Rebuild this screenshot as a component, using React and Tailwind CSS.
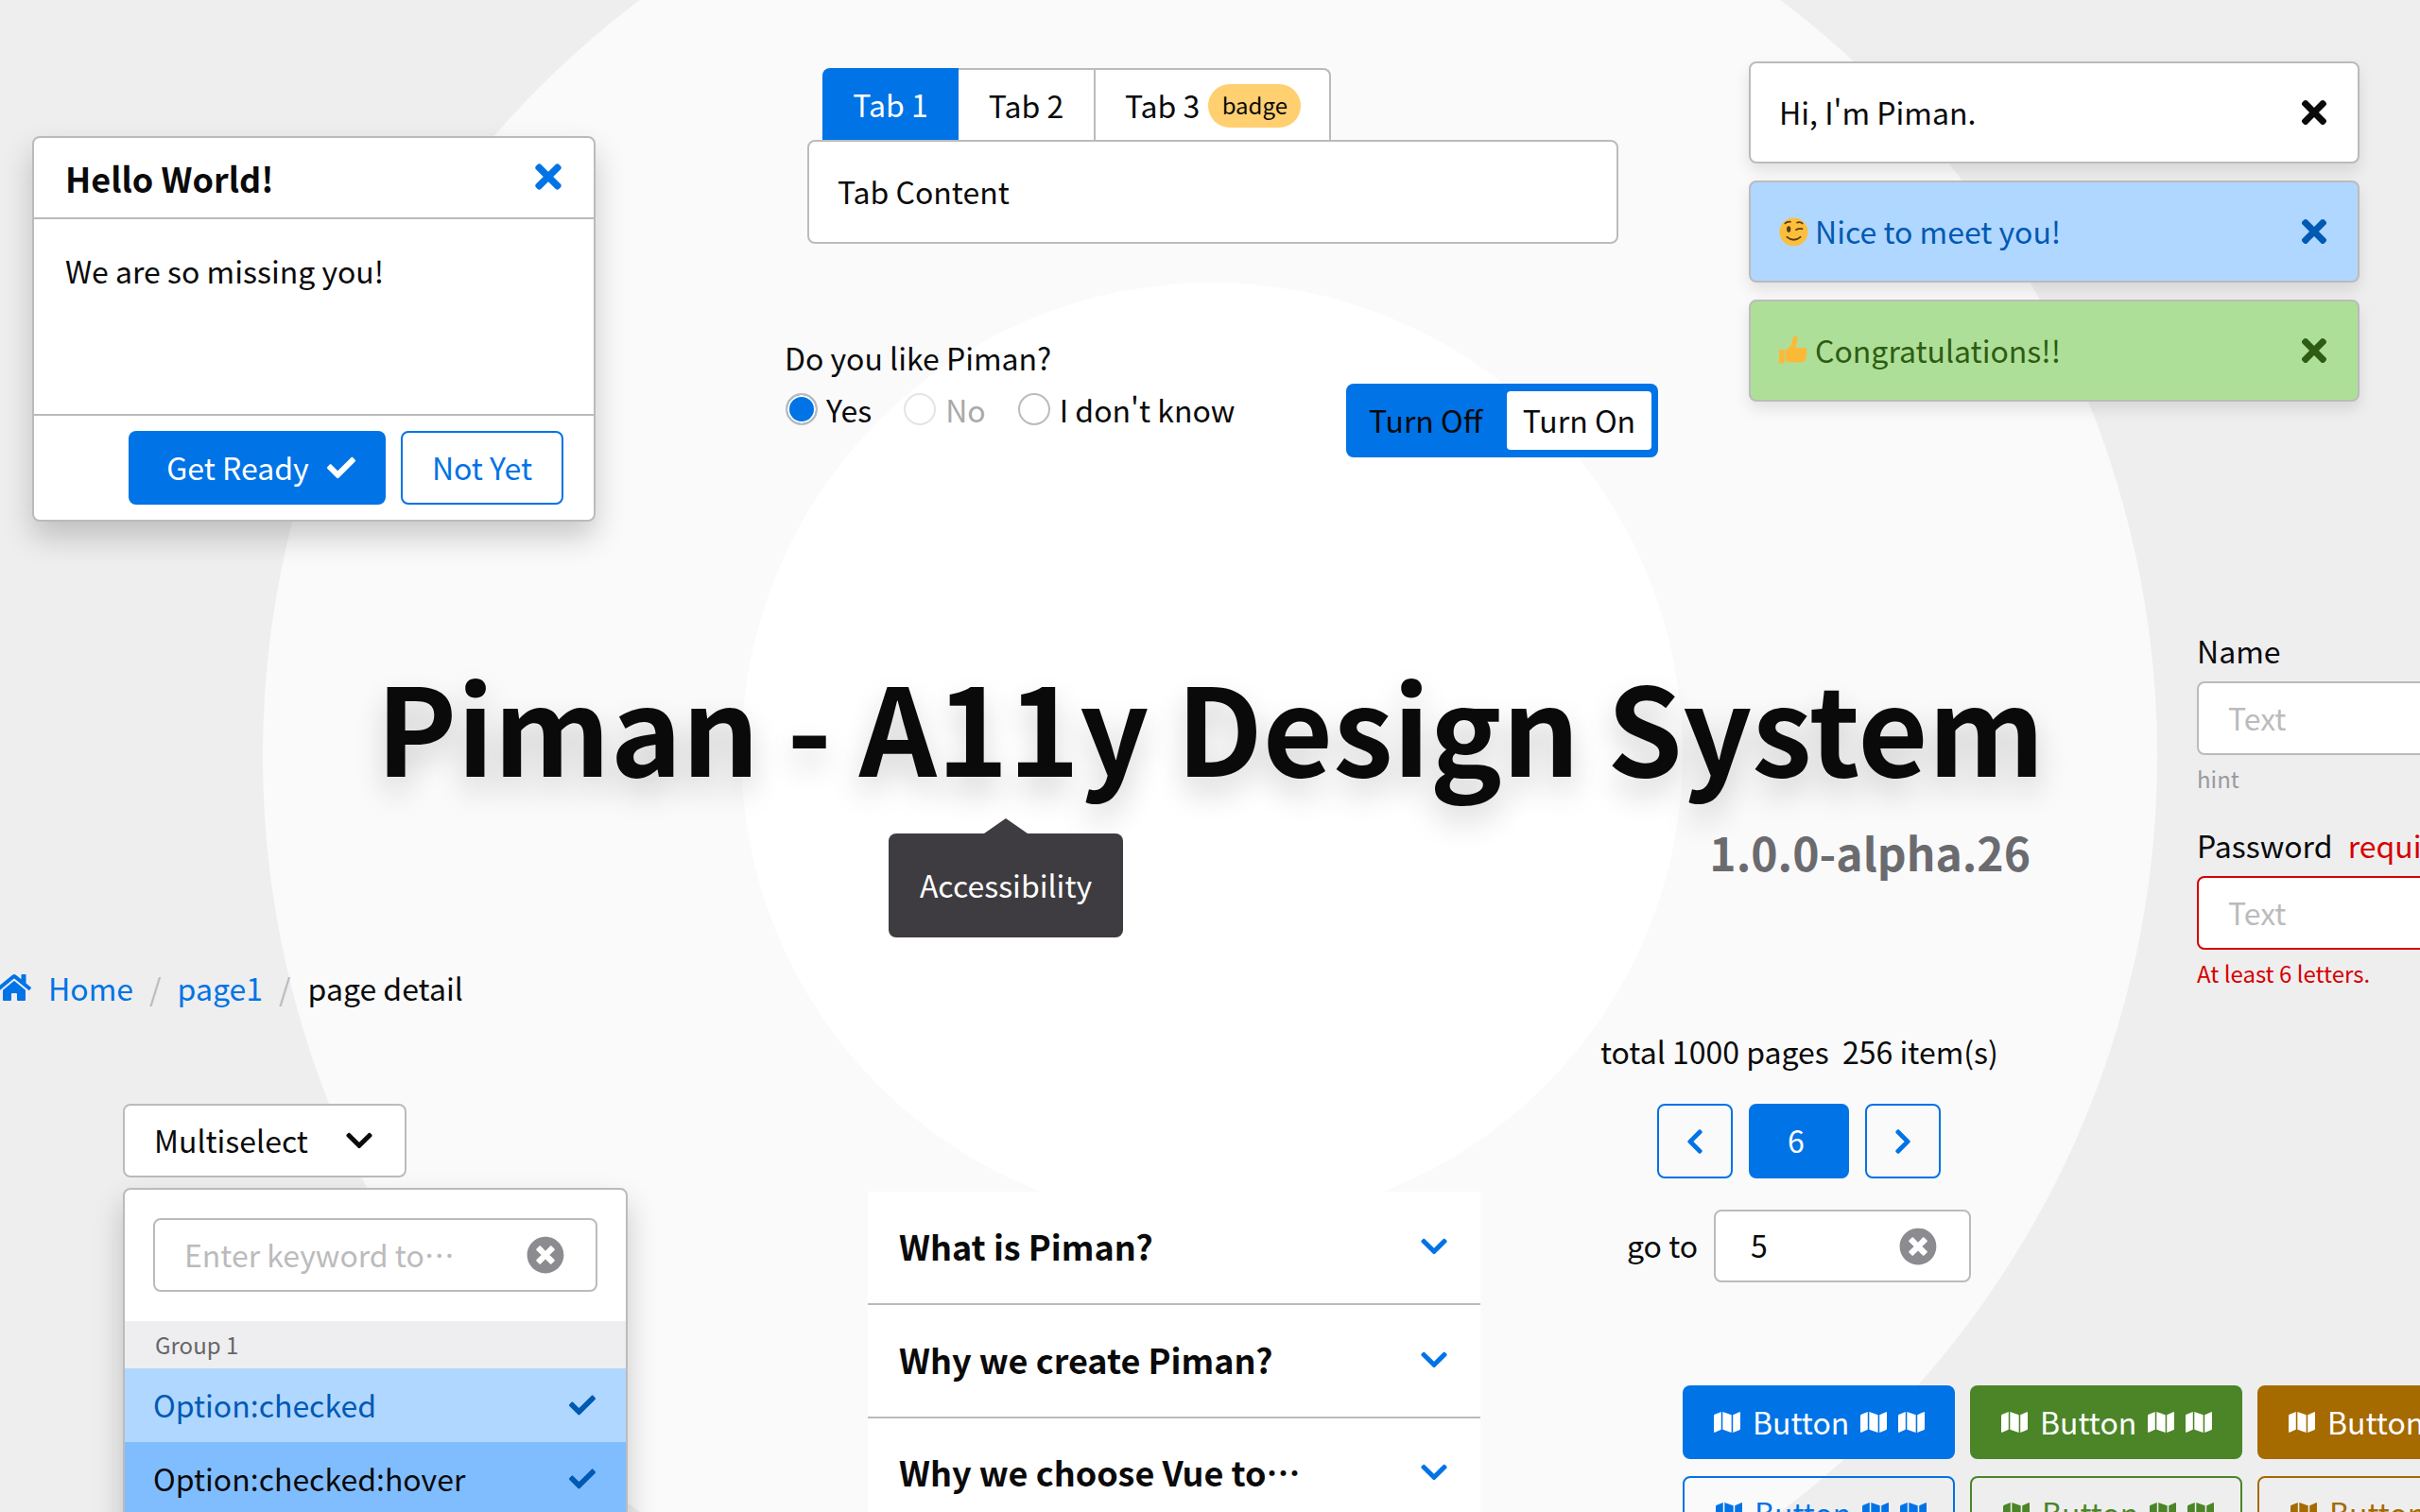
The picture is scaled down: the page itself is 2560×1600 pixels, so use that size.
import React from "react";
import {
  FaTimes,
  FaCheck,
  FaHome,
  FaChevronDown,
  FaChevronLeft,
  FaChevronRight,
  FaMap,
  FaTimesCircle,
} from "react-icons/fa";

function WinkEmoji() {
  return (
    <svg viewBox="0 0 32 32" className="mt-[3px] h-[31px] w-[31px] shrink-0">
      <circle cx="16" cy="16" r="15.5" fill="#fbbf3c" />
      <ellipse cx="10.5" cy="13" rx="2.2" ry="3.4" fill="#5b3a16" />
      <path d="M18 14q4-3 8-1M6 7q3-3 7-2M19 6q4-2 7 1M8 21q8 7 16 0" fill="none" stroke="#5b3a16" strokeWidth="1.8" />
    </svg>
  );
}

function ThumbEmoji() {
  return (
    <svg viewBox="0 0 32 32" className="mt-[3px] h-[32px] w-[31px] shrink-0">
      <path
        d="M0 15h6v15H0zM7 16l6-6 3-10c3-1 5 2 4 5l-2 8h10c3 0 3 4 1 4 2 1 2 4 0 5 1 1 1 3-1 4 0 2-1 3-3 3H12l-5-2z"
        fill="#fbb93a"
      />
    </svg>
  );
}

function Alert({ bg, text, children }) {
  return (
    <div className={`flex h-[108px] items-center justify-between rounded-lg border-2 border-[#bbbbbd] pl-[30px] pr-[27px] shadow-[0_8px_16px_rgba(0,0,0,0.1)] ${bg} ${text}`}>
      <div className="flex items-center gap-[7px] pb-[3px]">{children}</div>
      <FaTimes className="text-[38px]" />
    </div>
  );
}

function MapButton({ className }) {
  return (
    <div className={`flex h-[78px] w-[288px] shrink-0 items-center rounded-lg pl-[33px] ${className}`}>
      <FaMap className="text-[28px]" />
      <span className="ml-[13px] pb-[3px]">Button</span>
      <FaMap className="ml-[12px] text-[28px]" />
      <FaMap className="ml-[12px] text-[28px]" />
    </div>
  );
}

function Field({ border, children, label, note }) {
  return (
    <div className="flex flex-col">
      <div className="h-[48px] leading-[44px]">{label}</div>
      <div className={`mt-[7px] flex h-[78px] w-[640px] items-center rounded-lg border-2 bg-white pb-[3px] pl-[31px] text-[#bbbbbd] ${border}`}>Text</div>
      <div className="mt-[5px] h-[44px] text-[24px] leading-[40px]">{note}</div>
      {children}
    </div>
  );
}

function AccordionRow({ title, divider }) {
  return (
    <div className={`flex items-center justify-between pl-[33px] pr-[33px] ${divider ? "h-[120px] border-b-2 border-[#bbbbbd]" : "h-[116px]"}`}>
      <span className="pb-[5px] text-[36px] font-bold">{title}</span>
      <FaChevronDown className="mb-[2px] text-[32px] text-[#0073e6]" />
    </div>
  );
}

export default function App() {
  return (
    <div
      lang="zh-CN"
      className="relative h-[1600px] w-[2560px] overflow-hidden bg-[#eeeeef] text-[32px] leading-[48px] text-[#0a0a0a]"
      style={{ fontFamily: '"Noto Sans CJK SC", "Noto Sans", sans-serif' }}
    >
      {/* background circles */}
      <div className="absolute left-[278px] top-[-202px] h-[2004px] w-[2004px] rounded-full bg-[#fafafb]" />
      <div className="absolute left-[784px] top-[299px] h-[996px] w-[996px] rounded-full bg-white" />

      {/* dialog */}
      <div className="absolute left-[34px] top-[144px] w-[596px] rounded-lg border-2 border-[#bbbbbd] bg-white shadow-[0_16px_32px_rgba(0,0,0,0.2)]">
        <div className="flex h-[86px] items-center justify-between border-b-2 border-[#bbbbbd] pl-[33px] pr-[28px]">
          <span className="text-[36px] font-bold">Hello World!</span>
          <FaTimes className="mb-[2px] text-[40px] text-[#0073e6]" />
        </div>
        <div className="h-[208px] border-b-2 border-[#bbbbbd] px-[33px] pt-[30px]">We are so missing you!</div>
        <div className="flex justify-end gap-[16px] pb-[16px] pr-[32px] pt-[16px]">
          <div className="flex h-[78px] w-[272px] items-center justify-center gap-[19px] rounded-lg bg-[#0073e6] pl-[8px] text-white">
            <span className="pb-[3px]">Get Ready</span>
            <FaCheck className="text-[30px]" />
          </div>
          <div className="flex h-[78px] w-[172px] items-center justify-center rounded-lg border-2 border-[#0073e6] pb-[3px] text-[#0073e6]">Not Yet</div>
        </div>
      </div>

      {/* tabs */}
      <div className="absolute left-[854px] top-[72px] flex w-[858px] flex-col">
        <div className="ml-[16px] flex h-[78px]">
          <div className="flex w-[144px] items-center justify-center rounded-tl-lg bg-[#0073e6] pb-[3px] text-white">Tab 1</div>
          <div className="flex w-[145px] items-center justify-center border-r-2 border-t-2 border-[#bbbbbd] bg-white pb-[3px]">Tab 2</div>
          <div className="flex w-[249px] items-center gap-[9px] rounded-tr-lg border-r-2 border-t-2 border-[#bbbbbd] bg-white pl-[31px]">
            <span className="pb-[3px]">Tab 3</span>
            <span className="flex h-[46px] w-[98px] items-center justify-center rounded-full bg-[#ffcf70] pb-[2px] text-[24px]">badge</span>
          </div>
        </div>
        <div className="-mt-[2px] flex h-[110px] items-center rounded-lg border-2 border-[#bbbbbd] bg-white pb-[3px] pl-[30px]">Tab Content</div>
      </div>

      {/* radio group */}
      <div className="absolute left-[830px] top-[354px] flex flex-col">
        <div className="h-[48px]">Do you like Piman?</div>
        <div className="mt-[7px] flex h-[48px] items-center">
          <span className="ml-[1px] h-[34px] w-[34px] rounded-full border-2 border-[#bbbbbd] bg-[#0073e6] shadow-[inset_0_0_0_2px_white]" />
          <span className="ml-[9px]">Yes</span>
          <span className="ml-[34px] h-[34px] w-[34px] rounded-full border-2 border-[#e4e4e6] bg-white" />
          <span className="ml-[10px] text-[#a9a9ab]">No</span>
          <span className="ml-[34px] h-[34px] w-[34px] rounded-full border-2 border-[#bbbbbd] bg-white" />
          <span className="ml-[10px]">I don't know</span>
        </div>
      </div>

      {/* switch */}
      <div className="absolute left-[1424px] top-[406px] flex h-[78px] w-[330px] items-center rounded-lg bg-[#0073e6] pl-[24px] pr-[7px]">
        <span className="w-[146px] pb-[3px]">Turn Off</span>
        <span className="flex h-[62px] flex-1 items-center justify-center rounded bg-white pb-[3px]">Turn On</span>
      </div>

      {/* alerts */}
      <div className="absolute left-[1850px] top-[65px] flex w-[646px] flex-col gap-[18px]">
        <Alert bg="bg-white" text="text-[#0a0a0a]">Hi, I'm Piman.</Alert>
        <Alert bg="bg-[#b0d7ff]" text="text-[#0059b3]">
          <WinkEmoji />
          Nice to meet you!
        </Alert>
        <Alert bg="bg-[#aedf98]" text="text-[#2e5c12]">
          <ThumbEmoji />
          Congratulations!!
        </Alert>
      </div>

      {/* title */}
      <div className="absolute left-[398px] top-[672px] flex w-[1760px] flex-col items-end">
        <h1 className="w-full whitespace-nowrap text-[128px] font-bold leading-[190px] [text-shadow:0_16px_32px_rgba(0,0,0,0.18)]">
          Piman - A11y Design System
        </h1>
        <div className="mr-[10px] mt-[7px] text-[48px] font-bold leading-[64px] text-[#6b6b6f]">1.0.0-alpha.26</div>
      </div>

      {/* tooltip */}
      <div className="absolute left-[940px] top-[882px] flex h-[110px] w-[248px] items-center justify-center rounded-lg bg-[#3e3c40] pb-[3px] text-white">
        <span className="absolute left-[101px] top-[-16px] h-0 w-0 border-x-[23px] border-b-[16px] border-x-transparent border-b-[#3e3c40]" />
        Accessibility
      </div>

      {/* form */}
      <div className="absolute left-[2324px] top-[666px] flex flex-col">
        <Field border="border-[#bbbbbd]" label="Name" note={<span className="text-[#9a9a9c]">hint</span>}>
          <div className="mt-[24px]" />
        </Field>
        <Field
          border="border-[#d60000]"
          label={
            <span>
              Password <span className="ml-[9px] text-[#d60000]">required</span>
            </span>
          }
          note={<span className="text-[#d60000]">At least 6 letters.</span>}
        />
      </div>

      {/* breadcrumb */}
      <div className="absolute left-0 top-[1021px] flex h-[48px] items-center">
        <FaHome className="ml-[-3px] text-[36px] text-[#0073e6]" />
        <span className="ml-[18px] text-[#0073e6]">Home</span>
        <span className="mx-[17px] text-[#bbbbbd]">/</span>
        <span className="text-[#0073e6]">page1</span>
        <span className="ml-[17px] mr-[18px] text-[#bbbbbd]">/</span>
        <span>page detail</span>
      </div>

      {/* multiselect */}
      <div className="absolute left-[130px] top-[1168px] flex w-[534px] flex-col items-start">
        <div className="flex h-[78px] w-[300px] items-center justify-between rounded-lg border-2 border-[#bbbbbd] bg-white pl-[31px] pr-[32px]">
          <span className="pb-[2px]">Multiselect</span>
          <FaChevronDown className="text-[32px]" />
        </div>
        <div className="mt-[11px] h-[400px] w-full rounded-lg border-2 border-[#bbbbbd] bg-white shadow-[0_16px_32px_rgba(0,0,0,0.2)]">
          <div className="px-[30px] pt-[30px]">
            <div className="flex h-[78px] items-center justify-between rounded-lg border-2 border-[#bbbbbd] pl-[31px] pr-[33px] text-[#bbbbbd]">
              <span className="pb-[3px]">Enter keyword to…</span>
              <FaTimesCircle className="text-[40px] text-[#8c8c90]" />
            </div>
          </div>
          <div className="mt-[31px] flex h-[50px] items-center bg-[#eeeef0] pl-[32px] text-[24px] text-[#666668]">Group 1</div>
          <div className="flex h-[78px] items-center justify-between bg-[#b0d7ff] pl-[30px] pr-[32px] text-[#0059b3]">
            <span className="pb-[3px]">Option:checked</span>
            <FaCheck className="text-[28px]" />
          </div>
          <div className="flex h-[78px] items-center justify-between bg-[#80bdff] pl-[30px] pr-[32px]">
            <span className="pb-[3px]">Option:checked:hover</span>
            <FaCheck className="text-[28px] text-[#0059b3]" />
          </div>
        </div>
      </div>

      {/* accordion */}
      <div className="absolute left-[918px] top-[1261px] w-[648px] bg-white">
        <AccordionRow title="What is Piman?" divider />
        <AccordionRow title="Why we create Piman?" divider />
        <AccordionRow title="Why we choose Vue to…" />
      </div>

      {/* pagination */}
      <div className="absolute left-[1693px] top-[1088px] whitespace-nowrap">total 1000 pages&nbsp; 256 item(s)</div>
      <div className="absolute left-[1753px] top-[1168px] flex h-[79px] gap-[17px] text-[#0073e6]">
        <div className="flex w-[80px] items-center justify-center rounded-lg border-2 border-[#0073e6]">
          <FaChevronLeft className="text-[30px]" />
        </div>
        <div className="flex w-[106px] items-center justify-center rounded-lg bg-[#0073e6] pb-[3px] pr-[6px] text-white">6</div>
        <div className="flex w-[80px] items-center justify-center rounded-lg border-2 border-[#0073e6]">
          <FaChevronRight className="text-[30px]" />
        </div>
      </div>
      <div className="absolute left-[1721px] top-[1280px] flex items-center gap-[17px]">
        <span className="pb-[3px]">go to</span>
        <div className="flex h-[77px] w-[272px] items-center justify-between rounded-lg border-2 border-[#bbbbbd] bg-white pl-[37px] pr-[34px]">
          <span className="pb-[3px]">5</span>
          <FaTimesCircle className="text-[40px] text-[#8c8c90]" />
        </div>
      </div>

      {/* buttons */}
      <div className="absolute left-[1780px] top-[1466px] flex flex-col gap-[18px]">
        <div className="flex gap-[16px] text-white">
          <MapButton className="bg-[#0073e6]" />
          <MapButton className="bg-[#4b8527]" />
          <MapButton className="bg-[#a56a00]" />
        </div>
        <div className="flex gap-[16px]">
          <MapButton className="border-2 border-[#0073e6] text-[#0073e6]" />
          <MapButton className="border-2 border-[#4b8527] text-[#4b8527]" />
          <MapButton className="border-2 border-[#a56a00] text-[#a56a00]" />
        </div>
      </div>
    </div>
  );
}
